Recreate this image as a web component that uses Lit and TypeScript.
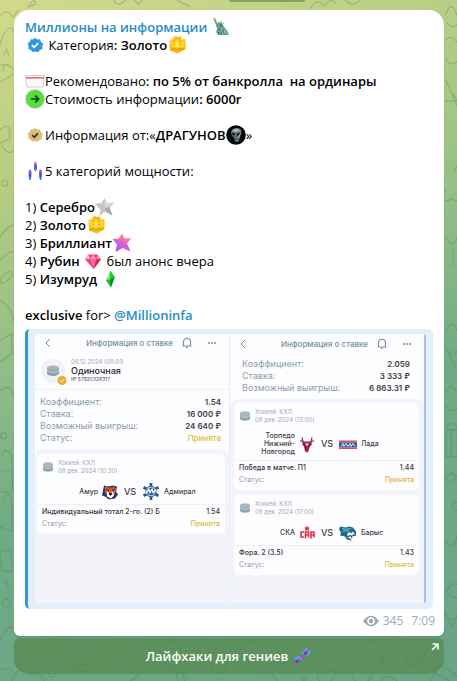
import { LitElement, html, svg, css } from "lit";
import { customElement, property } from "lit/decorators.js";

const icons: Record<string, unknown> = {
  liberty: svg`<path d="M6 7l3-2 3 3 2 3 2 2 2 5H7l-2-3 1-3z" fill="#6fa79b"/><path d="M4 3l3 8" stroke="#5f9c8e" stroke-width="2"/><path d="M8 9l1-3 2 1 1 2-2 2z" fill="#4d8379"/><path d="M7 5l1 1M10 4v2M13 6l-2 1" stroke="#76aca0"/><path d="M7 13l3-1 1 6M11 12l3 6M8 15l-1 2" stroke="#2e625c" fill="none"/><path d="M10 11l2 6M14 13v4" stroke="#b5d4c8" fill="none"/><circle cx="3.500" cy="2" r="1.300" fill="#e0a562"/>`,
  verified: svg`<path d="M10 2.800l2.300 1.600 2.800-.1.900 2.700 2.200 1.700-.9 2.600.3 2.800-2.700 1-1.800 2.100-2.800-.8-2.800.7-1.600-2.200-2.600-1 .2-2.800-1-2.600 2.300-1.700 1-2.600 2.700.1z" fill="#309bdc"/><path d="M6.900 10.200l2.300 2.200 4-4.200" stroke="#fff" stroke-width="1.700" fill="none"/>`,
  source: svg`<path d="M10 3l2.200 1.500 2.700-.1.900 2.600 2.100 1.700-.9 2.500.3 2.700-2.600.9-1.800 2-2.700-.7-2.700.7-1.600-2.100-2.500-1 .2-2.700-1-2.500 2.200-1.600 1-2.500 2.600.1z" fill="#dcbb79"/><path d="M7.200 10.200l2.100 2.100 3.700-4" stroke="#3b3425" stroke-width="1.700" fill="none"/>`,
  gold: svg`<path d="M8 1l3 1 3-.5L15 4l3.500.500V14L11 18.500 3 15.500 2.500 6 5 4z" fill="#fbb90c"/><path d="M2.500 6l3-2 1 4 3.500-4 3 4 5-3.500-1 8-4 2H6z" fill="#ffd42b"/><path d="M10 5l2 5-2 2-2-2zM5 4l2-1 1 2zM14 3l2 2-2 1z" fill="#fff07a"/><path d="M6 13q4 3 8 0M7 9v1M13 9v1" stroke="#d89200" stroke-width="1.200" fill="none"/><path d="M3 15.500L6 12v4zM18.500 14L15 12l-1 4z" fill="#f0a600"/>`,
  card: svg`<path d="M.5 4.500h19l-1.300 11.500H1.800z" fill="#fafafa" stroke="#cfcfcf"/><path d="M1 6.800h18" stroke="#f2605a" stroke-width="1.500"/>`,
  go: svg`<circle cx="10" cy="10" r="9.300" fill="#58dc42" stroke="#a5c89d" stroke-width=".7"/><path d="M6 10h7.500M10.200 6.500L13.700 10l-3.500 3.500" stroke="#17351b" stroke-width="1.600" fill="none"/>`,
  skull: svg`<circle cx="10" cy="10" r="9.800" fill="#07080a"/><path d="M5 7q1-4 6-4 5 0 4.500 5L14 12l-1 4-2 1-2-1-1-4-2-1z" fill="#65727a"/><path d="M6 6q2-3 6-2l2 2-4 1z" fill="#aab6bd"/><path d="M6 8l3 .5-.5 2L6.500 10zM11 8.500l3-.5-1 2.500h-1.500zM9.500 11.500h1.400l-.3-1.500z" fill="#08090b"/><path d="M8.500 12.500l1 1 3-.5M9.500 15h2M14 9l-1 3" stroke="#c3cdd1" stroke-width=".8" fill="none"/><path d="M9 14h3.500" stroke="#15191c"/>`,
  people: svg`<path d="M10.500 2.500v6M5 10.500v6M15.500 10.500v6" stroke="#4a43c6" stroke-width="2.600"/><path d="M9.500 4h2.500M4 12h2.500M14.500 12h2.500" stroke="#8362e8" stroke-width="1.500"/><circle cx="10.500" cy="1.800" r="1.200" fill="#e58aa0"/><circle cx="5" cy="9.800" r="1.200" fill="#8f69d3"/><circle cx="15.500" cy="9.800" r="1.200" fill="#9a54d4"/><path d="M10.500 7v3M5 15v4M15.500 15v4" stroke="#277cd8" stroke-width="1.600"/>`,
  silver: svg`<path d="M9.500 1l2.300 5 7.700-.2-5 4.700 3 8-7.200-4L4 19l1.500-6L0 6.500l6.500-.3z" fill="#c5c5c7"/><path d="M9.500 1l2.300 5 7.700-.2L10 11z" fill="#dadadb"/><path d="M10.300 14.500l7.200 4-3-8L10 11z" fill="#aaa9ac"/>`,
  diamond: svg`<defs><linearGradient id="d" x1=".7" y1="0" x2=".3" y2="1"><stop offset=".1" stop-color="#ff8c82"/><stop offset=".5" stop-color="#e45fcb"/><stop offset="1" stop-color="#9d55fb"/></linearGradient></defs><path d="M10 .5l2.500 5 7-.2-4.500 5 3.500 8.200-8-3.500-7 4 1.500-7.500L.5 6l6-.3z" fill="url(#d)"/><path d="M1.500 6.500L12 9l-8 7 2-5z" fill="#b36aff" opacity=".6"/>`,
  ruby: svg`<path d="M5.500 3.500h9L18 8.200 10.500 18 2 8.200z" fill="#f14376"/><path d="M5.500 3.500L7 8.200l3-4.700 3.500 4.700 1-4.700 3.500 4.700H2z" fill="#ff94b3"/><path d="M7 8.200h6.500L10.500 18z" fill="#fb6892"/><path d="M3 7l3-2 1 2z" fill="#ffd4e0"/><path d="M13.500 8.200H18L10.500 18z" fill="#cf2358"/>`,
  emerald: svg`<path d="M10.500 2l4.200 6-3.800 10.500L6 11.500z" fill="#22b934"/><path d="M10.500 2L6 11.500l4-1z" fill="#7bea71"/><path d="M10.500 2l4.200 6-4.700 2.500z" fill="#15d62b"/><path d="M10 10.500l.9 8 3.800-10.500z" fill="#078d24"/>`,
  dna: svg`<path d="M2 17q-1-5 4-6 5 0 5-3 1-5 7-6 1 6-4 7-3 0-4 4-2 5-8 4z" fill="#3c829f"/><path d="M2 17q1-5 5-4 5-1 5-5 1-4 6-5" stroke="#d934d5" stroke-width="2" fill="none"/><path d="M2 13l5-2 3 3M10 7l6 2 2-5M12 5l4-3" stroke="#3cc6db" stroke-width="1.400" fill="none"/><path d="M4 15l2 1M12 7l3 1" stroke="#6930b0" stroke-width="2"/>`,
};

const emoji = (name: string) =>
  html`<svg class="emoji" viewBox="0 0 20 20" aria-hidden="true">${icons[name]}</svg>`;

const logos: Record<string, unknown> = {
  amur: svg`<path d="M2 2l4 1 5-1 4 1-1 5 2 3-3 4-6 1-4-3-3-1 1-5z" fill="#253a70"/><path d="M3 3l4 1 4-1 3 2-1 5-2 3H6L3 9z" fill="#d8622f"/><path d="M5 8l3 2 3-2 1 4-3 3-4-2z" fill="#fff"/><path d="M7 10h3l-1.500 2zM4 6l3 1M10 7l3-1M7 3v2M10 3v2" stroke="#1c2032"/>`,
  admiral: svg`<path d="M8 0v16M1 4l14 8M1 12l14-8" stroke="#2a548e" stroke-width="2.500"/><circle cx="8" cy="8" r="5.300" fill="#315e98"/><circle cx="8" cy="8" r="4" fill="none" stroke="#b5cee4"/><path d="M3 10l3-4 1 3 2-3 1 3 3-3" stroke="#fff" fill="none" stroke-width="1.300"/>`,
  torpedo: svg`<path d="M3 1l1 4 4 2 4-2 1-4M1 4l4 2M15 4l-4 2" stroke="#7e4b50" stroke-width="1.300" fill="none"/><path d="M4 5h8l1 3-2 2-2 6-3-1-1-5-2-2z" fill="#bd2442"/><path d="M5 7l2 3v4M11 7l-2 3" stroke="#35263a" stroke-width="1.300" fill="none"/><path d="M6 7h4l-2 3z" fill="#f3d9dd"/>`,
  lada: svg`<path d="M0 4h18v2H0z" fill="#de4b58"/><path d="M0 6h18v5H0z" fill="#2d58a4"/><path d="M0 11h18v1.500H0z" fill="#df4855"/><path d="M2 10l2-3 1 3 2-3 2 3 2-3 1 3 2-3 2 3" stroke="#e7edf7" fill="none"/>`,
  ska: svg`<path d="M8 1l1 2h2L9.500 4.500 10 7 8 5.500 6 7l.5-2.500L5 3h2z" fill="#dd3347"/><path d="M5 7.500H2v5h3M6.500 14V7.500h3V13M6 10.500h4M12 14V7.500h3V13M12 10.500h3" stroke="#dc3448" stroke-width="1.600" fill="none"/>`,
  barys: svg`<path d="M1 2l6 1 3-1 4 1 3 4v4l-4 1-1 4-4-1-2-3-5-1 1-3-2-3z" fill="#236887"/><path d="M3 4l5 1 4-1M4 7l4-1 3 2" stroke="#4bafc1" stroke-width="1.500" fill="none"/><path d="M8 9l5-2 3 2-3 2-1 4-3-2z" fill="#e6eff2"/><path d="M9 12l3-1 1 2M11 7l2 1" stroke="#16283c" fill="none"/>`,
};

const logo = (name: string) =>
  html`<svg class="logo" viewBox="0 0 ${name === "lada" || name === "barys" ? 18 : 16} 16" aria-hidden="true">${logos[name]}</svg>`;

const puck = html`<svg class="puck" viewBox="0 0 12 12" aria-hidden="true">
  <path d="M1 3.500v5c0 3 10 3 10 0v-5z" fill="#91a4ad" /><ellipse cx="6" cy="3.500" rx="5" ry="2.300" fill="#a9b9c0" />
  <path d="M1 5c0 3 10 3 10 0" fill="none" stroke="#dbe4e8" stroke-width=".7" />
</svg>`;

interface Match {
  when: string;
  home: string;
  homeLogo: string;
  away: string;
  awayLogo: string;
  bet: string;
  odds: string;
}

interface Slip {
  single?: boolean;
  rows: [string, string][];
  matches: Match[];
}

const slips: Slip[] = [
  {
    single: true,
    rows: [["Коэффициент:", "1.54"], ["Ставка:", "16 000 ₽"], ["Возможный выигрыш:", "24 640 ₽"], ["Статус:", "Принята"]],
    matches: [
      { when: "08 дек. 2024 (10:30)", home: "Амур", homeLogo: "amur", away: "Адмирал", awayLogo: "admiral", bet: "Индивидуальный тотал 2-го. (2) Б", odds: "1.54" },
    ],
  },
  {
    rows: [["Коэффициент:", "2.059"], ["Ставка:", "3 333 ₽"], ["Возможный выигрыш:", "6 863.31 ₽"]],
    matches: [
      { when: "08 дек. 2024 (13:00)", home: "Торпедо Нижний-Новгород", homeLogo: "torpedo", away: "Лада", awayLogo: "lada", bet: "Победа в матче. П1", odds: "1.44" },
      { when: "08 дек. 2024 (17:00)", home: "СКА", homeLogo: "ska", away: "Барыс", awayLogo: "barys", bet: "Фора. 2 (3.5)", odds: "1.43" },
    ],
  },
];

@customElement("bet-slip")
export class BetSlip extends LitElement {
  @property({ attribute: false }) slip!: Slip;

  static styles = css`
    :host { display: flex; flex-direction: column; min-width: 0; background: #fdfdff; color: #3a3d42; font: 7px/12px Inter, "Noto Sans", sans-serif; }
    .bar { display: grid; grid-template-columns: 26px 1fr 16px 34px; align-items: center; height: 18px; color: #788f9a; }
    .bar.tall { height: 20px; }
    .bar svg { display: block; margin: auto; }
    .title { text-align: right; font-size: 8px; font-weight: 500; white-space: nowrap; padding-right: 6px; }
    .profile { display: flex; gap: 6px; align-items: center; padding: 0 6px; height: 38px; border-bottom: 1px solid #f1f2f6; box-sizing: border-box; }
    .avatar { display: block; width: 24px; height: 26px; overflow: visible; }
    .who { display: flex; flex-direction: column; line-height: 9px; white-space: nowrap; }
    .date, .league { font-size: 6px; color: #9cabb2; }
    .name { font-size: 9px; font-weight: 500; color: #25282c; }
    .number { font-size: 5px; color: #4e5358; }
    .facts { margin: 0; padding: 6px 8px 5px 5px; }
    .tall + .facts { padding: 4px 14px 5px 12px; }
    .fact { display: flex; justify-content: space-between; white-space: nowrap; }
    .facts dt { font-size: 9px; }
    .facts dd { font-size: 8px; }
    dt { color: #8b9da6; }
    dd { margin: 0; font-weight: 600; color: #3b3f44; }
    .fact .accepted { color: #e2b843; font-weight: 500; }
    .cards { flex: 1; display: flex; flex-direction: column; gap: 5px; padding: 5px 4px 26px 2px; background: #f3f4f9; border-radius: 8px 8px 0 0; }
    .tall ~ .cards { padding: 4px 5px 28px 4px; }
    .card { background: #fdfdff; border-radius: 5px; padding: 5px 0 4px; }
    .meta { display: flex; align-items: center; gap: 4px; padding: 0 5px; line-height: 8px; white-space: nowrap; }
    .league { display: flex; flex-direction: column; }
    .puck { width: 12px; height: 12px; }
    .teams { display: grid; grid-template-columns: 61px 16px 16px 18px 1fr; column-gap: 4px; align-items: center; padding: 8px 0 4px; min-height: 17px; line-height: 8px; font-weight: 500; border-bottom: 1px solid #edf0f4; }
    .home { text-align: right; }
    .vs { font-size: 9px; text-align: center; }
    .logo { width: 100%; height: 17px; }
    .bet { margin: 0; padding: 1px 5px 0; }
    .bet .stake { color: #33363b; font-weight: 500; }
    .bet dd { font-weight: 500; }
  `;

  render() {
    const { single, rows, matches } = this.slip;
    return html`
      <div class="bar ${single ? "" : "tall"}">
        <svg width="8" height="10" viewBox="0 0 8 10" aria-hidden="true"><path d="M6 1L2 5l4 4" fill="none" stroke="currentColor" /></svg>
        <span class="title">Информация о ставке</span>
        <svg width="12" height="12" viewBox="0 0 12 12" aria-hidden="true"><path d="M1.500 9h9M2.500 9V5c0-5 7-5 7 0v4M5 10.500h2" fill="none" stroke="currentColor" stroke-width="1.200" /></svg>
        <svg width="10" height="4" viewBox="0 0 10 4" aria-hidden="true"><path d="M1 2h2M4 2h2M7 2h2" stroke="currentColor" stroke-width="1.500" /></svg>
      </div>
      ${single
        ? html`<div class="profile">
            <svg class="avatar" viewBox="0 0 24 26" aria-hidden="true">
              <circle cx="12" cy="13" r="12" fill="#f1f2f8" />
              <path d="M6 10v5c0 4 12 4 12 0v-5z" fill="#8ca0ab" /><ellipse cx="12" cy="10" rx="6" ry="2.600" fill="#a5b5be" />
              <path d="M6 12c0 3 12 3 12 0" fill="none" stroke="#e2e8ec" stroke-width=".8" />
              <circle cx="21" cy="22.500" r="4.500" fill="#e5ac30" /><path d="M19 22.500l1.500 1.500 2.600-3" fill="none" stroke="#fff" />
            </svg>
            <div class="who"><span class="date">08.12.2024 (08:01)</span><span class="name">Одиночная</span><span class="number">№ 57920326317</span></div>
          </div>`
        : ""}
      <dl class="facts">
        ${rows.map(([k, v]) => html`<div class="fact"><dt>${k}</dt><dd class=${v === "Принята" ? "accepted" : ""}>${v}</dd></div>`)}
      </dl>
      <div class="cards">
        ${matches.map((m) => html`<article class="card">
          <div class="meta">${puck}<div class="league"><span>Хоккей. КХЛ</span><span>${m.when}</span></div></div>
          <div class="teams"><span class="home">${m.home}</span>${logo(m.homeLogo)}<span class="vs">VS</span>${logo(m.awayLogo)}<span>${m.away}</span></div>
          <dl class="bet">
            <div class="fact"><dt class="stake">${m.bet}</dt><dd>${m.odds}</dd></div>
            <div class="fact"><dt>Статус:</dt><dd class="accepted">Принята</dd></div>
          </dl>
        </article>`)}
      </div>
    `;
  }
}

@customElement("app-root")
export class AppRoot extends LitElement {
  static styles = css`
    :host { display: block; position: relative; min-height: 100vh; box-sizing: border-box; padding: 10px 13px 8px 14px; overflow: hidden; background: linear-gradient(160deg, #d3d98c 0%, #b5cd83 22%, #94bf86 42%, #70ab85 62%, #6aa487 100%); font: 13px/18px "Open Sans", "Noto Sans", sans-serif; color: #000; }
    .doodles { position: absolute; inset: 0; width: 100%; height: 100%; }
    .chip { position: absolute; top: 0; left: 50%; width: 76px; height: 2px; border-radius: 0 0 6px 6px; background: #7ea65f; }
    .bubble { position: relative; background: #fff; border-radius: 15px 15px 6px 6px; padding: 8px 11px 3px; box-shadow: 0 1px 1px #5c8d6c; }
    .line { margin: 0; min-height: 18px; white-space: pre-wrap; }
    b, .channel, .mention { font-weight: 600; }
    a { text-decoration: none; }
    .channel, .mention { color: #258bcb; }
    .emoji { display: inline-block; width: 20px; height: 20px; margin: -3px 0; vertical-align: -2px; }
    .preview { margin-top: 5px; padding: 5px 7px 6px; border-left: 3px solid #3397d4; border-radius: 5px; background: #e3f0f9; }
    .shot { display: grid; grid-template-columns: 1fr 1fr; column-gap: 1px; min-height: 268px; border-right: 2px solid #a5bff3; border-radius: 3px; overflow: hidden; }
    .foot { display: flex; justify-content: flex-end; align-items: center; height: 24px; margin-right: -2px; color: #a0acb6; font-size: 12px; }
    .eye { width: 16px; height: 12px; margin-right: 4px; }
    .views { margin-right: 8px; }
    .action { position: relative; display: flex; width: 100%; height: 36px; margin-top: 2px; padding: 0; align-items: center; justify-content: center; gap: 4px; border: 0; border-radius: 6px 6px 15px 15px; background: rgba(82, 130, 66, 0.6); color: #fff; font: inherit; font-weight: 600; }
    .out { position: absolute; top: 5px; right: 5px; width: 8px; height: 8px; }
  `;

  private doodles() {
    return html`<svg class="doodles" viewBox="0 0 457 681" preserveAspectRatio="xMidYMid slice" fill="none" stroke="#47783f" stroke-opacity=".32" stroke-width="1.100" aria-hidden="true">
      <path d="M0 16q7-9 13 1l6-7M28 8q5-10 8-6-1 4-6 4M114 0q3 8 12 0M134 0l4 4 5-4M177 0l5 3 9 4M310 9q6-12 14-3 7-10 12-2M345 0q8 8 15 0" />
      <path d="M0 46q5-19 12-18l6 8M0 65q7-2 14 4M4 55l3-6 2 7M0 82q8-4 14-8M4 71q-2-8 6-7M0 130q8-8 10 0v9l-10 4M2 145q5 10 12 6" />
      <circle cx="5" cy="183" r="3" /><path d="M0 237q8-12 14-12M0 260q7-8 14-9M7 272c-10 9-7 15 3 6 5-5 3-8-3-6M0 300q13 6 14 22M0 340l12-7v20l-12 9M0 390q12-9 14 7" />
      <circle cx="4" cy="435" r="3" /><path d="M2 456q4-13 10 0l1 35H0M2 470h11M4 500q5-13 8 0v31l-12-5M0 550h10l4 20H2zM6 578l3 11" /><circle cx="7" cy="602" r="4" />
      <path d="M445 15q6-17 12 1M446 22q6 8 11 2M445 40q7-6 12 3M445 58q5 10 12 3M445 79l12 27m-12-5h12l-4-7M453 172q7-12 4-8M446 190c-7 6-2 15 5 8 7 8 10-4 6-8M445 236q8 15 12 0M453 248v18" />
      <path d="M445 333q6-18 12-2M445 346q7 13 12 4M447 350l8 17M446 393q3-13 10-3M447 404q-2 9 10 4M446 429h11v27h-11zM451 429v27M446 426q5-7 11 1M445 479q5-12 12-2M446 483l10-5" />
      <circle cx="456" cy="505" r="4" /><path d="M445 540q8 13 12-6" /><circle cx="454" cy="590" r="7" /><path d="M444 610l8 17 5-13M447 619q4-5 8 3" />
      <path d="M0 640q8-17 14-13l4 10q19-11 36 2l15-9q-2 13-18 14M20 652q16-5 24 3M90 640q4 9 14 2M69 663q8 12 20 6M72 664l17-1M80 669q11-17 35-18 23 3 26 21l-12 9M97 656q4 17 12 9M103 661l4 1M116 661l4 1M106 667q4 4 9-1" />
      <path d="M161 653q-5-13 8-14 11 0 12 11l5 9-20 7zM174 665l5 17 6-1-4-18M203 635l13 14 17-11M240 637q12 9 19-2M213 660q-6 10 3 12 12 1 10-10-7-6-13-2zM257 670q13-3 21 11M318 672q5-8 9 0 8-5 8 1-1 7-11 10-10-6-6-11zM354 661q6-7 12 0v6q9 3 4 11-9 9-18-1l1-10-3-2zM380 681q4-10 17-1" />
      <path d="M409 649q8-6 16 3-1 13-16 12-5-8 0-15M422 648l5-6M425 651l6-2M416 653l1 2M413 659l1 2M363 637q16 10 28-2l14 3M430 681l9-18 18 12M434 671l15 9M0 670q6-5 12 0M12 681q3-15 18-13 15 7 14 13M24 667q3 9 12 5" />
      <circle cx="52" cy="673" r="3" /><circle cx="382" cy="660" r="2" /><circle cx="304" cy="678" r="2" />
    </svg>`;
  }

  render() {
    return html`${this.doodles()}
      <span class="chip"></span>
      <main class="bubble">
        <p class="line"><a class="channel" href="#channel">Миллионы на информации</a> ${emoji("liberty")}</p>
        <p class="line">${emoji("verified")} Категория<b>: Золото</b>${emoji("gold")}</p>
        <p class="line"></p>
        <p class="line">${emoji("card")}Рекомендовано<b>: по 5% от банкролла  на ординары</b></p>
        <p class="line">${emoji("go")}Стоимость информации<b>: 6000r</b></p>
        <p class="line"></p>
        <p class="line">${emoji("source")}Информация от:«<b>ДРАГУНОВ</b>${emoji("skull")}»</p>
        <p class="line"></p>
        <p class="line">${emoji("people")}5 категорий мощности:</p>
        <p class="line"></p>
        <p class="line">1) <b>Серебро</b>${emoji("silver")}</p>
        <p class="line">2) <b>Золото</b>${emoji("gold")}</p>
        <p class="line">3) <b>Бриллиант</b>${emoji("diamond")}</p>
        <p class="line">4) <b>Рубин</b> ${emoji("ruby")} был анонс вчера</p>
        <p class="line">5) <b>Изумруд</b> ${emoji("emerald")}</p>
        <p class="line"></p>
        <p class="line"><b>exclusive</b> for&gt; <a class="mention" href="#millioninfa">@Millioninfa</a></p>
        <section class="preview">
          <div class="shot">${slips.map((s) => html`<bet-slip .slip=${s}></bet-slip>`)}</div>
        </section>
        <footer class="foot">
          <svg class="eye" viewBox="0 0 16 12" aria-hidden="true"><path d="M0 6Q8-4.500 16 6 8 16.500 0 6z" fill="#9aa8b4" /><circle cx="8" cy="6" r="3.800" fill="#fff" /><circle cx="8" cy="6" r="2.200" fill="#9aa8b4" /></svg>
          <span class="views">345</span><time>7:09</time>
        </footer>
      </main>
      <button class="action" type="button">
        <span>Лайфхаки для гениев</span>${emoji("dna")}
        <svg class="out" viewBox="0 0 8 8" aria-hidden="true"><path d="M1.500 1H7v5.500M7 1L1 7" fill="none" stroke="#fff" stroke-width="1.600" /></svg>
      </button>`;
  }
}
